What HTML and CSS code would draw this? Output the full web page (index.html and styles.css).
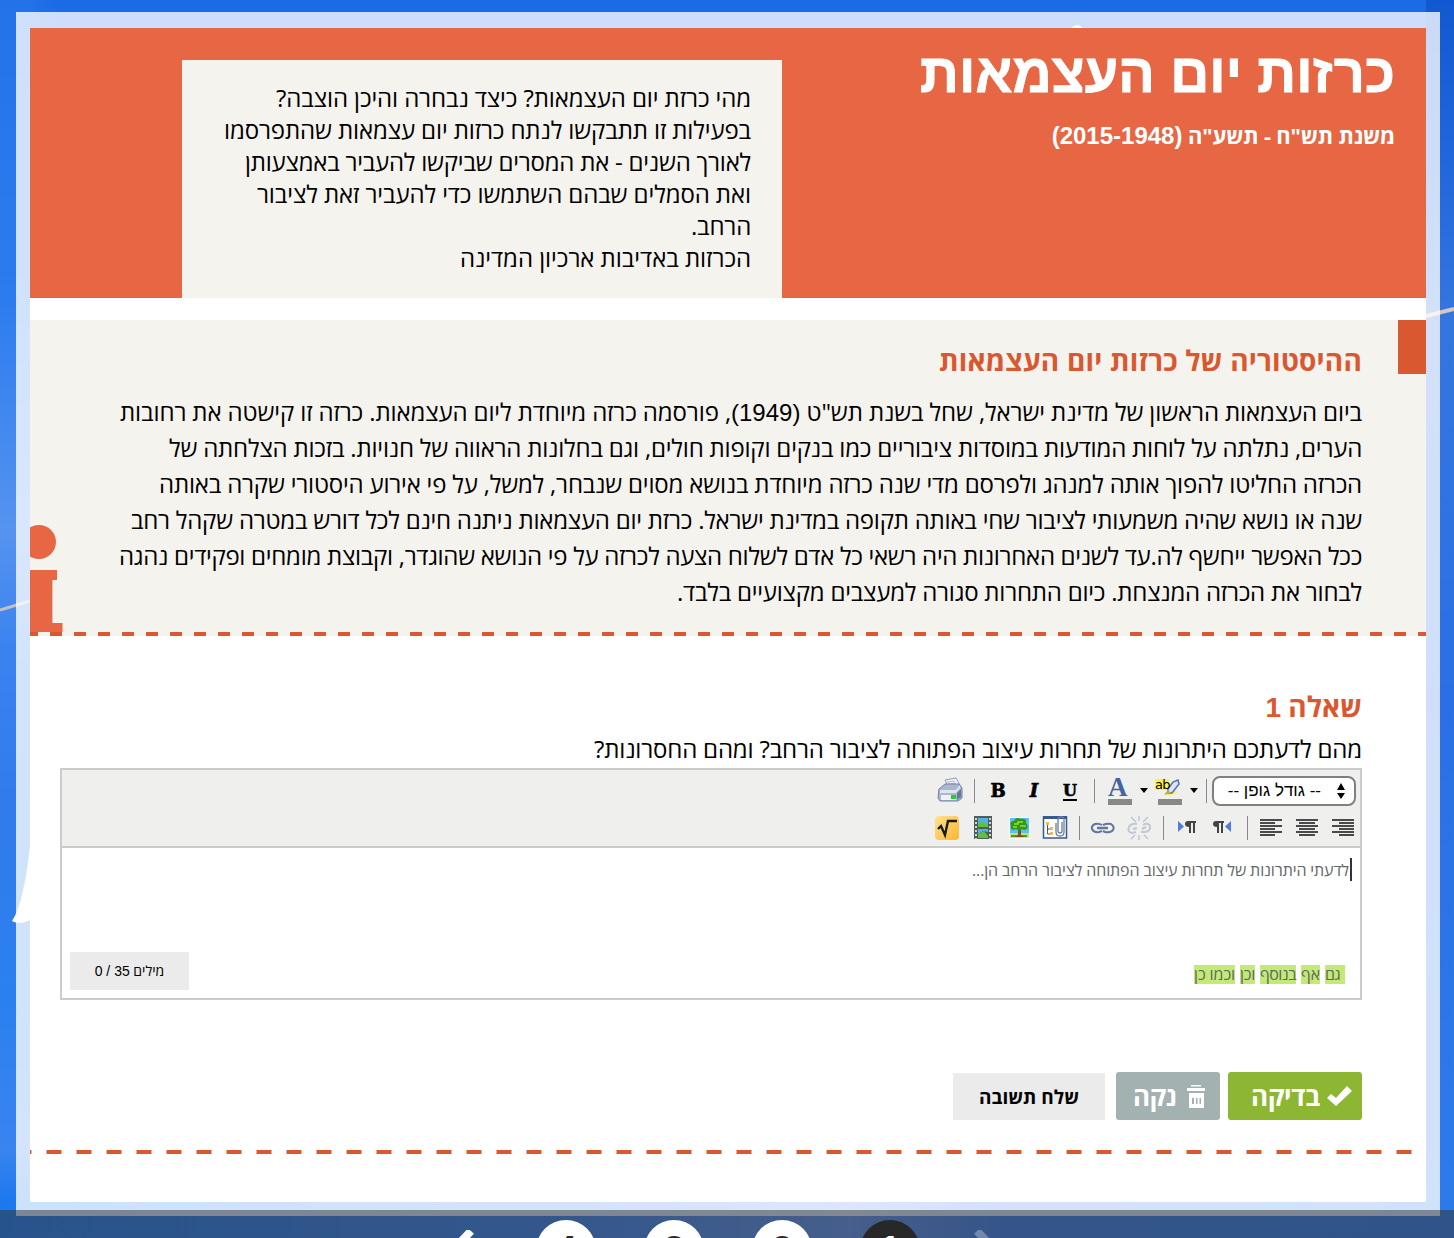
FILE: index.html
```html
<!DOCTYPE html>
<html lang="he" dir="rtl">
<head>
<meta charset="utf-8">
<title>כרזות יום העצמאות</title>
<link rel="stylesheet" href="styles.css">
</head>
<body>
<svg class="sky" viewBox="0 0 1454 1238" aria-hidden="true">
  <path d="M0 610 30 601" stroke="#c4bfc4" stroke-width="3"/>
  <path d="M1426 316 1454 309" stroke="#d8c6ba" stroke-width="4"/>
  <path d="M30 845Q27 875 22 895 18 912 12 921 20 926 32 919Z" fill="#fff"/>
  <path d="M1070 30Q1077 20 1084 30Z" fill="#fff"/>
</svg>
<div class="frame">
<main class="sheet">
  <header class="hero">
    <div class="hero-title">
      <h1><span class="t-main">כרזות יום העצמאות</span></h1>
      <p><span class="t-sub">משנת תש"ח - תשע"ה <span class="num">(2015-1948)</span></span></p>
    </div>
    <div class="intro">
      <span class="line i1">מהי כרזת יום העצמאות? כיצד נבחרה והיכן הוצבה?</span>
      <span class="line i2">בפעילות זו תתבקשו לנתח כרזות יום עצמאות שהתפרסמו</span>
      <span class="line i3">לאורך השנים - את המסרים שביקשו להעביר באמצעותן</span>
      <span class="line i4">ואת הסמלים שבהם השתמשו כדי להעביר זאת לציבור</span>
      <span class="line i5">הרחב.</span>
      <span class="line i6">הכרזות באדיבות ארכיון המדינה</span>
    </div>
  </header>

  <section class="history">
    <div class="marker"></div>
    <svg class="info" width="33" height="108" viewBox="0 0 33 108" aria-hidden="true"><g fill="#e76744"><circle cx="9" cy="18" r="17"/><path d="M0 46H27V56H22.400V99H32.500V108H0Z"/></g></svg>
    <h2><span class="t-hist">ההיסטוריה של כרזות יום העצמאות</span></h2>
    <div class="story">
      <span class="line p1">ביום העצמאות הראשון של מדינת ישראל, שחל בשנת תש"ט <span class="num">(1949)</span>, פורסמה כרזה מיוחדת ליום העצמאות. כרזה זו קישטה את רחובות</span>
      <span class="line p2">הערים, נתלתה על לוחות המודעות במוסדות ציבוריים כמו בנקים וקופות חולים, וגם בחלונות הראווה של חנויות. בזכות הצלחתה של</span>
      <span class="line p3">הכרזה החליטו להפוך אותה למנהג ולפרסם מדי שנה כרזה מיוחדת בנושא מסוים שנבחר, למשל, על פי אירוע היסטורי שקרה באותה</span>
      <span class="line p4">שנה או נושא שהיה משמעותי לציבור שחי באותה תקופה במדינת ישראל. כרזת יום העצמאות ניתנה חינם לכל דורש במטרה שקהל רחב</span>
      <span class="line p5">ככל האפשר ייחשף לה.עד לשנים האחרונות היה רשאי כל אדם לשלוח הצעה לכרזה על פי הנושא שהוגדר, וקבוצת מומחים ופקידים נהגה</span>
      <span class="line p6">לבחור את הכרזה המנצחת. כיום התחרות סגורה למעצבים מקצועיים בלבד.</span>
    </div>
  </section>

  <section class="question">
    <h2><span class="t-q">שאלה <span class="num">1</span></span></h2>
    <p class="ask"><span class="t-ask">מהם לדעתכם היתרונות של תחרות עיצוב הפתוחה לציבור הרחב? ומהם החסרונות?</span></p>
    <div class="editor">
      <div class="toolbar" dir="ltr">
        <div class="tools">
          <svg class="tool" viewBox="0 0 36 36"><path d="M13 7 24 5 28 12 17 15Z" fill="#f5f7fc" stroke="#8d9dbb"/><path d="M15 9 23 8M16 11 24 10" stroke="#a9b7cf"/><path d="M7 16 13 11 27 11 30 15V25L26 28H8L6 25Z" fill="#aab7cf" stroke="#7383a3"/><path d="M8 17H24L28 12V15L24 20H8Z" fill="#dfe5ef"/><path d="M9 22H24V27H9Z" fill="#eef1f5"/><rect x="19" y="22" width="5" height="4" fill="#1fd12c"/><path d="M25 20 29 16V24L25 27Z" fill="#647798"/></svg>
          <i class="sep"></i>
          <span class="tool letter">B</span>
          <span class="tool letter italic">I</span>
          <span class="tool letter under">U</span>
          <i class="sep"></i>
          <svg class="tool wide" viewBox="0 0 50 36"><text x="8" y="23" class="glyph-a">A</text><path d="M8 26H32V32H8Z" fill="#888"/><path d="M40 15H48L44 20Z" fill="#000"/></svg>
          <svg class="tool wide" viewBox="0 0 50 36"><path d="M5 6H19V17H5Z" fill="#fff43d"/><path d="M14 20 22 17 28 19 19 23Z" fill="#fff060"/><path d="M28 7 23 9 18 16 18 20 22 20 29 11Z" fill="#dbe6f5" stroke="#5276ac" stroke-width="1.500"/><path d="M18 17 14 22 21 20Z" fill="#c6a84b"/><text x="5" y="16" class="glyph-ab">ab</text><path d="M8 26H32V32H8Z" fill="#888"/><path d="M40 15H48L44 20Z" fill="#000"/></svg>
          <i class="sep"></i>
          <div class="select" dir="rtl"><svg width="10" height="18" viewBox="0 0 10 18"><path d="M1 8 5 1 9 8ZM1 11H9L5 17Z"/></svg><span class="t-sel">-- גודל גופן --</span></div>
        </div>
        <div class="tools second">
          <svg class="tool" viewBox="0 0 36 36"><defs><linearGradient id="gold" x2="1" y2="1"><stop stop-color="#ffe092"/><stop offset="1" stop-color="#ffb62c"/></linearGradient></defs><rect x="6" y="6" width="24" height="24" rx="4" fill="url(#gold)"/><path d="M9 19 12 16 16 25 19 11H28" fill="none" stroke="#161d18" stroke-width="2.400"/></svg>
          <svg class="tool" viewBox="0 0 36 36"><path d="M9 6H27V29H9Z" fill="#4f5d5b"/><path d="M13 8H23V17H13Z" fill="#55afe8"/><path d="M13 17V14L17 11 23 15V17ZM13 28V24L19 21 23 26V28Z" fill="#5cc23d"/><path d="M13 19H23V22L18 21 13 24Z" fill="#55afe8"/><path d="M11 8V29M25 8V29" stroke="#cdd3d1" stroke-width="2" stroke-dasharray="2 2"/></svg>
          <svg class="tool" viewBox="0 0 36 36"><path d="M8 7H29V29H8Z" fill="#fff"/><path d="M9 8H28V24H9Z" fill="#5ebdf1"/><path d="M9 23H28V28H9Z" fill="#b9e870"/><path d="M10 26H26" stroke="#4e9821" stroke-width="2"/><path d="M17 18H20L20 25 23 27H14L17 25Z" fill="#83501d"/><path d="M10 16Q8 11 13 11 15 6 20 9 26 8 25 13 29 18 24 20 20 18 18 21 15 18 12 20 9 19 10 16Z" fill="#2f9a13"/><path d="M13 14H17V12H22M12 17H16M19 16H25" stroke="#9bd83a" stroke-width="1.500" fill="none"/></svg>
          <svg class="tool" viewBox="0 0 36 36"><path d="M6.500 7H29.500V28H6.500Z" fill="#fff" stroke="#38598f" stroke-width="1.500"/><path d="M6 6H30V9H6Z" fill="#38598f"/><path d="M9 12H12V15H9ZM13 17H16V20H13ZM13 22H16V25H13Z" fill="#f4bb49"/><path d="M10.500 15V24H13M10.500 19H13" stroke="#38598f" fill="none"/><path d="M19 13V22Q19 26 23 26 27 26 27 22V9Q27 7 24 7 21 7 21 10V21Q21 23 23 23 25 23 25 21V12" fill="none" stroke="#667ea1" stroke-width="1.300"/></svg>
          <i class="sep"></i>
          <svg class="tool" viewBox="0 0 36 36"><g fill="none" stroke="#60769f" stroke-width="2"><path d="M17 15Q14 13 10 14 6 16 7 19 9 23 14 22L17 21M18 15Q22 13 26 14 30 17 28 20 26 23 20 22L18 21"/><path d="M12 18H23" stroke-width="2.500"/></g></svg>
          <svg class="tool" viewBox="0 0 36 36"><g fill="none" stroke="#c1c8d3" stroke-width="2"><path d="M16 14Q10 13 8 17 6 22 11 23L15 22M12 19 16 18M22 15Q27 12 29 16 30 21 24 22H20M21 19 25 17"/><path d="M18 6V11M10 7 15 12M27 7 22 12M18 25V30M14 25 10 29M23 25 27 29" stroke-width="1.500"/></g></svg>
          <i class="sep"></i>
          <svg class="tool" viewBox="0 0 36 36"><path d="M9 11 15 16.500 9 22Z" fill="#517bdd"/><path d="M27 11H19Q16 11 16 14 16 17 20 17V23H22V13H24V23H26V13H27Z" fill="#444"/></svg>
          <svg class="tool" viewBox="0 0 36 36"><path d="M26 11 20 16.500 26 22Z" fill="#517bdd"/><path d="M19 11H11Q8 11 8 14 8 17 12 17V23H14V13H16V23H18V13H19Z" fill="#444"/></svg>
          <i class="sep"></i>
          <svg class="tool" viewBox="0 0 36 36"><path d="M7 10H29M7 13H22M7 16H29M7 19H22M7 22H29M7 25H22" stroke="#151515" stroke-width="1.700"/></svg>
          <svg class="tool" viewBox="0 0 36 36"><path d="M7 10H29M10 13H26M7 16H29M10 19H26M7 22H29M10 25H26" stroke="#151515" stroke-width="1.700"/></svg>
          <svg class="tool" viewBox="0 0 36 36"><path d="M7 10H29M14 13H29M7 16H29M14 19H29M7 22H29M14 25H29" stroke="#151515" stroke-width="1.700"/></svg>
        </div>
      </div>
      <div class="answer">
        <p class="placeholder"><i class="caret"></i><span class="t-ph">לדעתי היתרונות של תחרות עיצוב הפתוחה לציבור הרחב הן...</span></p>
        <div class="answer-foot">
          <div class="words"><mark class="w1">גם</mark><mark class="w2">אף</mark><mark class="w3">בנוסף</mark><mark class="w4">וכן</mark><mark class="w5">וכמו כן</mark></div>
          <div class="counter">מילים <span class="num">35 / 0</span></div>
        </div>
      </div>
    </div>
    <div class="actions">
      <button class="btn check"><svg width="25" height="20" viewBox="0 0 25 20"><path d="M0 12 4 8 9 12 20 0 25 5 9 20Z" fill="#fff"/></svg><span>בדיקה</span></button>
      <button class="btn clear"><svg width="18" height="23" viewBox="0 0 18 23"><path d="M4 0H14V1.500H4ZM0 3H18V6H0ZM2 8H17V23H2ZM5 13V19H7V13ZM9 13V19H10.500V13ZM12.500 13V19H14V13Z" fill="#fff" fill-rule="evenodd"/></svg><span>נקה</span></button>
      <button class="btn send">שלח תשובה</button>
    </div>
    <div class="rule"></div>
  </section>
</main>
</div>
<nav class="pager" dir="ltr">
  <svg class="arrow" width="24" height="44" viewBox="0 0 24 44"><path d="M21 1 3 20 21 39" fill="none" stroke="#fff" stroke-width="8"/></svg>
  <span class="page">4</span><span class="page">3</span><span class="page">2</span><span class="page current">1</span>
  <svg class="arrow off" width="24" height="44" viewBox="0 0 24 44"><path d="M3 1 21 20 3 39" fill="none" stroke="#fff" stroke-width="8"/></svg>
</nav>
</body>
</html>
```
FILE: styles.css
```css
* { box-sizing: border-box; }
body { margin: 0; height: 1238px; position: relative; overflow: hidden; font-family: "Open Sans", "Liberation Sans", Arial, sans-serif; color: #000;
  background:
    linear-gradient(90deg, #1d78ee, #2c7cec 300px, #3680ee 560px, #5c90ec 850px, #3a7ce8 1000px, #2a7aea) 0 100% / 100% 36px no-repeat,
    linear-gradient(#1258d0, #2468dc 180px, #3575e0 316px, #2a70e4 700px, #2f7bea) 100% 0 / 28px 100% no-repeat,
    linear-gradient(90deg, transparent 30px, #1b6ae6 60px),
    linear-gradient(#2472e8, #2d7cef 300px, #5593ef 530px, #3a83ef 650px, #317bec 800px, #2b80ef 1000px, #3984ef 1150px, #1d78ee 1200px); }
h1, h2, p { margin: 0; }
.num { font-family: "Liberation Sans", Arial, sans-serif; line-height: 1; letter-spacing: 0; }
.sky { position: absolute; inset: 0; width: 1454px; height: 1238px; }
.frame { position: relative; top: 12px; width: 1424px; height: 1204px; margin: 0 14px 0 16px; padding: 16px 14px 14px; background: rgba(255, 255, 255, .78); }
.sheet { height: 1174px; background: #fff; }
.line { display: block; white-space: nowrap; }

.hero { height: 270px; display: flex; align-items: flex-start; background: #e76744; }
.hero-title { width: 644px; padding: 11px 31px 0 0; color: #fff; white-space: nowrap; }
h1 { font-family: "Liberation Sans", Arial, sans-serif; font-size: 54px; line-height: 68px; letter-spacing: .165px; -webkit-text-stroke: 1px #fff; }
.hero-title p { margin-top: 12px; font-size: 22px; line-height: 32px; font-weight: bold; letter-spacing: -.2px; }
.hero-title .num { font-size: 24px; }
.intro { width: 600px; height: 238px; margin-top: 32px; padding: 22px 31px 0 0; background: #f4f3ee; font-size: 24px; line-height: 32px; }
.i1 { letter-spacing: -.102px; }
.i2 { letter-spacing: -.129px; }
.i3 { letter-spacing: -.232px; }
.i4 { letter-spacing: -.098px; }
.i5 { letter-spacing: -.197px; }
.i6 { letter-spacing: -.045px; }

.history { position: relative; height: 316px; margin-top: 22px; padding: 20px 64px 0 0; background: #f4f3ee; }
.history::after { content: ""; position: absolute; left: 0; right: 0; bottom: 0; height: 4px; background: linear-gradient(90deg, #d9582f 12px, transparent 12px) 20px 0 / 24px 4px; }
.marker { position: absolute; top: 0; right: 0; width: 28px; height: 54px; background: #d9582f; }
.info { position: absolute; left: 0; bottom: 4px; }
h2 { color: #d9582f; font-size: 28px; line-height: 40px; }
.t-hist { letter-spacing: .177px; }
.story { margin-top: 14px; font-size: 24px; line-height: 36px; }
.p1 { letter-spacing: -.122px; }
.p2 { letter-spacing: -.205px; }
.p3 { letter-spacing: -.195px; }
.p4 { letter-spacing: -.233px; }
.p5 { letter-spacing: -.295px; }
.p6 { letter-spacing: -.227px; }

.question { position: relative; padding: 50px 64px 0 30px; }
.ask { margin-top: 4px; font-size: 24px; line-height: 38px; white-space: nowrap; letter-spacing: -.17px; }
.editor { height: 232px; border: 2px solid #ccc; }
.toolbar { height: 78px; padding: 2px 4px 0 0; border-bottom: 2px solid #ccc; background: #efefee; }
.tools { display: flex; justify-content: flex-end; align-items: center; height: 37px; }
.second { margin-right: -5px; }
.tool { flex: 0 0 36px; width: 36px; height: 36px; }
.wide { flex-basis: 50px; width: 50px; }
.letter { font: bold 18px/35px "DejaVu Serif", serif; text-align: center; -webkit-text-stroke: .7px #000; }
.italic { font-style: italic; }
.under { font-size: 16px; text-decoration: underline; text-decoration-thickness: 2px; text-underline-offset: 3px; }
.glyph-a { font: bold 27px "Liberation Serif", serif; fill: #42659f; }
.glyph-ab { font: 13px "DejaVu Sans", sans-serif; letter-spacing: -.7px; }
.sep { flex: 0 0 12px; height: 24px; background: linear-gradient(#8d8790, #8d8790) 6px 0 / 1px 100% no-repeat; }
.select { display: flex; align-items: center; gap: 15px; width: 144px; height: 30px; padding-right: 8px; border: 2px solid #808080; border-radius: 8px; background: #fff; font: 17px "Liberation Sans", sans-serif; white-space: nowrap; }
.answer { height: 150px; padding: 8px; display: flex; flex-direction: column; justify-content: space-between; color: #666; }
.placeholder { display: flex; gap: 1px; font-size: 16px; line-height: 28px; white-space: nowrap; letter-spacing: -.123px; }
.caret { width: 2px; height: 23px; margin-top: 2px; background: #333; }
.answer-foot { display: flex; justify-content: space-between; }
.words { display: flex; gap: 5px; margin: 13px 7px 0 0; font-size: 16px; line-height: 19px; }
mark { height: 19px; color: #666; background: #c1eb75; white-space: nowrap; }
.w1 { width: 20px; padding-right: 5px; letter-spacing: -.742px; }
.w2 { width: 19px; letter-spacing: -.094px; }
.w3 { width: 36px; letter-spacing: -.534px; }
.w4 { width: 15px; letter-spacing: -.26px; }
.w5 { width: 41px; letter-spacing: -.096px; }
.counter { width: 119px; height: 38px; background: #ebebeb; color: #000; font-size: 14px; line-height: 38px; text-align: center; }
.actions { display: flex; margin-top: 72px; height: 48px; }
.btn { display: flex; align-items: center; border: 0; padding: 0; font: bold 26px "Open Sans", sans-serif; color: #fff; white-space: nowrap; }
.check { width: 134px; padding-right: 10px; gap: 7px; border-radius: 3px; background: #8db733; letter-spacing: -.294px; }
.clear { width: 104px; margin-right: 8px; padding-right: 15px; gap: 11px; border-radius: 3px; background: #a3b1b1; letter-spacing: -.625px; }
.send { width: 152px; height: 47px; margin: 1px 11px 0 0; justify-content: center; background: #ebebeb; color: #000; font-size: 19px; }
.rule { height: 4px; margin: 30px -64px 0 -30px; background: linear-gradient(90deg, #d9582f 15px, transparent 15px) 16.5px 0 / 30px 4px; }

.pager { position: absolute; left: 0; right: 0; top: 1210px; height: 28px; padding: 10px 0 0 450px; display: flex; background: rgba(50, 50, 50, .52); overflow: hidden; }
.page { flex: none; width: 60px; height: 60px; margin-right: 48px; border-radius: 50%; background: #fff; color: #282828; font: bold 38px/60px "Liberation Sans", sans-serif; text-align: center; }
.current { margin-right: 0; background: #282828; color: #fff; }
.arrow { flex: none; margin: 10px 62px 0 0; }
.off { margin: 10px 0 0 54px; opacity: .3; }
```
